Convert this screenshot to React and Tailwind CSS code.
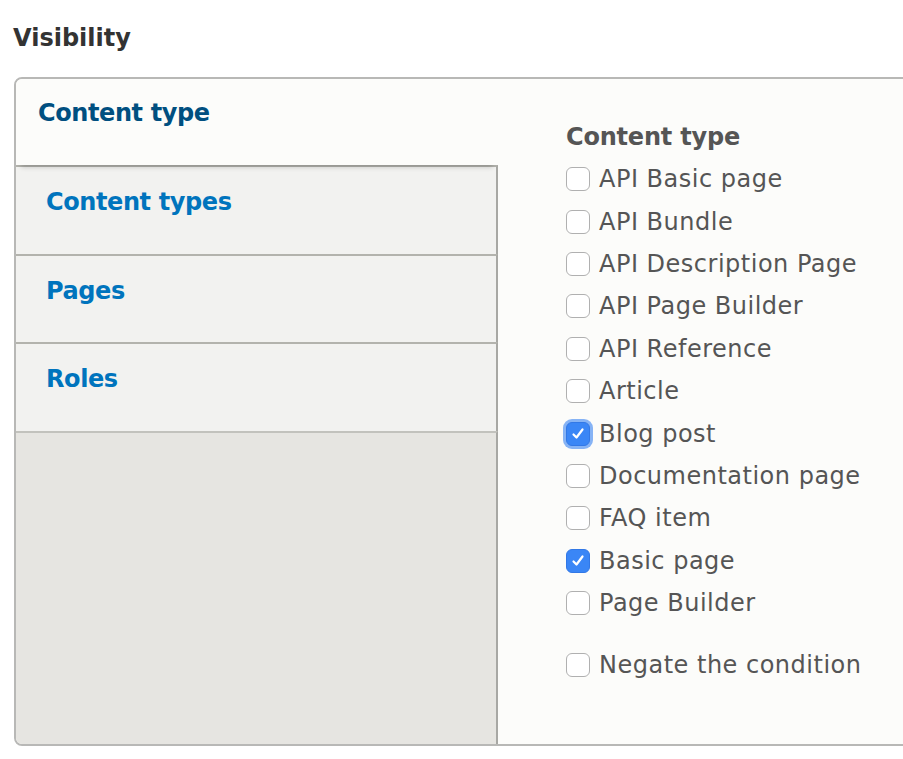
import React from 'react';

const items = [
  { label: 'API Basic page' },
  { label: 'API Bundle' },
  { label: 'API Description Page' },
  { label: 'API Page Builder' },
  { label: 'API Reference' },
  { label: 'Article' },
  { label: 'Blog post', checked: true, focused: true },
  { label: 'Documentation page' },
  { label: 'FAQ item' },
  { label: 'Basic page', checked: true },
  { label: 'Page Builder' },
];

const Checkbox = ({ checked, focused }) => (
  <span
    className={`w-[24px] h-[24px] rounded-[6px] flex items-center justify-center shrink-0 ${
      checked
        ? 'bg-[#3a86f6] border border-[#3278e6]'
        : 'bg-white border-[1.5px] border-[#b0b0b0]'
    } ${focused ? 'ring-[3px] ring-[#86b3f5]' : ''}`}
  >
    {checked && (
      <svg width="16" height="16" viewBox="0 0 16 16">
        <path d="M3.5 8.5 L6.5 11.5 L12.5 3.5" fill="none" stroke="white" strokeWidth="2.2" strokeLinecap="round" strokeLinejoin="round" />
      </svg>
    )}
  </span>
);

const Row = ({ label, checked, focused, className = '' }) => (
  <label className={`h-[42.4px] flex items-center gap-[9px] ${className}`}>
    <Checkbox checked={checked} focused={focused} />
    <span className="text-[24px] leading-[30px] tracking-[0.5px] text-[#555]">{label}</span>
  </label>
);

const tabs = ['Content types', 'Pages', 'Roles'];

export default function App() {
  return (
    <div className="w-[903px] h-[759px] overflow-hidden bg-white font-['DejaVu_Sans',sans-serif]">
      <h2 className="pl-[13px] pt-[22px] text-[24px] leading-[32px] font-bold text-[#333]">Visibility</h2>

      <div className="ml-[14px] mt-[23px] w-[1000px] h-[669px] border-2 border-[#b8b8b6] rounded-l-[8px] flex overflow-hidden bg-[#fcfcfa]">
        {/* Vertical tab list */}
        <div className="w-[482px] flex flex-col shrink-0">
          <div className="relative z-10 h-[86px] bg-[#fcfcfa] pl-[22px] pt-[19px] shadow-[0_7px_5px_-5px_rgba(0,0,0,0.2)]">
            <span className="text-[24px] leading-[30px] font-bold tracking-[-0.4px] text-[#004f80]">Content type</span>
          </div>
          {tabs.map((t) => (
            <div key={t} className="h-[88.7px] border-t-2 border-r-2 border-[#b3b3ad] border-r-[#a8a8a4] bg-[#f2f2f0] pl-[30px] pt-[20px]">
              <span className="text-[24px] leading-[30px] font-bold tracking-[-0.4px] text-[#0074bd]">{t}</span>
            </div>
          ))}
          <div className="flex-1 border-t-2 border-r-2 border-[#c2c2bd] border-r-[#a8a8a4] bg-[#e6e5e1]" />
        </div>

        {/* Pane */}
        <div className="flex-1 pl-[68px] pt-[37px]">
          <div className="h-[42px] flex items-center">
            <span className="text-[24px] leading-[30px] font-bold tracking-[-0.2px] text-[#555]">Content type</span>
          </div>
          {items.map((it) => (
            <Row key={it.label} {...it} />
          ))}
          <Row label="Negate the condition" className="mt-[20px]" />
        </div>
      </div>
    </div>
  );
}
